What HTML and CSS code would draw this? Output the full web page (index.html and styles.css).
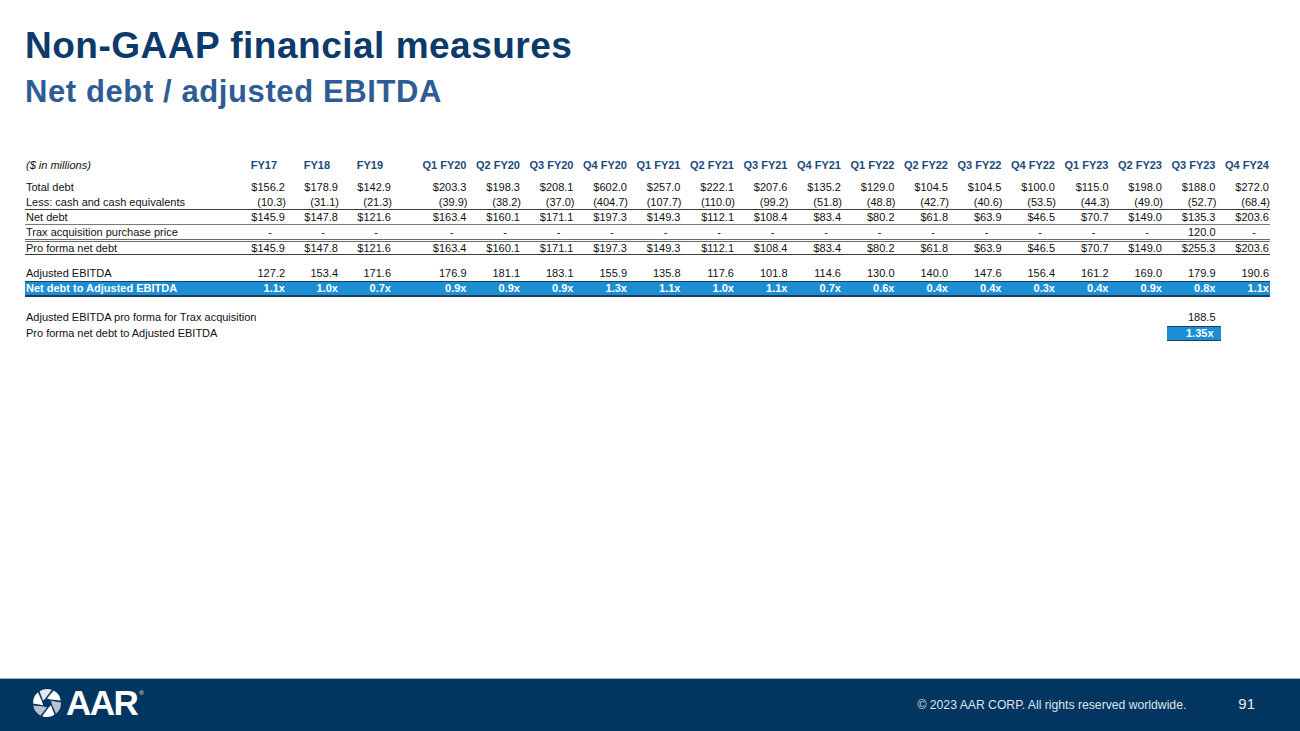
FILE: index.html
```html
<!DOCTYPE html>
<html lang="en">
<head>
<meta charset="utf-8">
<title>Non-GAAP financial measures</title>
<link rel="stylesheet" href="styles.css">
</head>
<body>
<div class="slide">
  <header class="head">
    <h1 class="title">Non-GAAP financial measures</h1>
    <h2 class="subtitle">Net debt / adjusted EBITDA</h2>
  </header>

  <main class="content">
    <table class="fin">
      <colgroup>
        <col class="c-label">
        <col class="c-num"><col class="c-num"><col class="c-num">
        <col class="c-gap">
        <col class="c-q"><col class="c-q"><col class="c-q"><col class="c-q">
        <col class="c-q"><col class="c-q"><col class="c-q"><col class="c-q">
        <col class="c-q"><col class="c-q"><col class="c-q"><col class="c-q">
        <col class="c-q"><col class="c-q"><col class="c-q"><col class="c-q">
      </colgroup>
      <thead>
        <tr class="hdr">
          <th class="lbl unit">($ in millions)</th>
          <th class="fy">FY17</th><th class="fy">FY18</th><th class="fy">FY19</th>
          <th></th>
          <th>Q1 FY20</th><th>Q2 FY20</th><th>Q3 FY20</th><th>Q4 FY20</th>
          <th>Q1 FY21</th><th>Q2 FY21</th><th>Q3 FY21</th><th>Q4 FY21</th>
          <th>Q1 FY22</th><th>Q2 FY22</th><th>Q3 FY22</th><th>Q4 FY22</th>
          <th>Q1 FY23</th><th>Q2 FY23</th><th>Q3 FY23</th><th>Q4 FY24</th>
        </tr>
      </thead>
      <tbody>
        <tr class="first">
          <td class="lbl">Total debt</td>
          <td>$156.2</td><td>$178.9</td><td>$142.9</td><td></td>
          <td>$203.3</td><td>$198.3</td><td>$208.1</td><td>$602.0</td>
          <td>$257.0</td><td>$222.1</td><td>$207.6</td><td>$135.2</td>
          <td>$129.0</td><td>$104.5</td><td>$104.5</td><td>$100.0</td>
          <td>$115.0</td><td>$198.0</td><td>$188.0</td><td>$272.0</td>
        </tr>
        <tr class="line-dark">
          <td class="lbl">Less: cash and cash equivalents</td>
          <td class="neg">(10.3)</td><td class="neg">(31.1)</td><td class="neg">(21.3)</td><td></td>
          <td class="neg">(39.9)</td><td class="neg">(38.2)</td><td class="neg">(37.0)</td><td class="neg">(404.7)</td>
          <td class="neg">(107.7)</td><td class="neg">(110.0)</td><td class="neg">(99.2)</td><td class="neg">(51.8)</td>
          <td class="neg">(48.8)</td><td class="neg">(42.7)</td><td class="neg">(40.6)</td><td class="neg">(53.5)</td>
          <td class="neg">(44.3)</td><td class="neg">(49.0)</td><td class="neg">(52.7)</td><td class="neg">(68.4)</td>
        </tr>
        <tr class="line-grey">
          <td class="lbl">Net debt</td>
          <td>$145.9</td><td>$147.8</td><td>$121.6</td><td></td>
          <td>$163.4</td><td>$160.1</td><td>$171.1</td><td>$197.3</td>
          <td>$149.3</td><td>$112.1</td><td>$108.4</td><td>$83.4</td>
          <td>$80.2</td><td>$61.8</td><td>$63.9</td><td>$46.5</td>
          <td>$70.7</td><td>$149.0</td><td>$135.3</td><td>$203.6</td>
        </tr>
        <tr class="line-double">
          <td class="lbl">Trax acquisition purchase price</td>
          <td class="dash">-</td><td class="dash">-</td><td class="dash">-</td><td></td>
          <td class="dash">-</td><td class="dash">-</td><td class="dash">-</td><td class="dash">-</td>
          <td class="dash">-</td><td class="dash">-</td><td class="dash">-</td><td class="dash">-</td>
          <td class="dash">-</td><td class="dash">-</td><td class="dash">-</td><td class="dash">-</td>
          <td class="dash">-</td><td class="dash">-</td><td>120.0</td><td class="dash">-</td>
        </tr>
        <tr class="line-dark pf">
          <td class="lbl">Pro forma net debt</td>
          <td>$145.9</td><td>$147.8</td><td>$121.6</td><td></td>
          <td>$163.4</td><td>$160.1</td><td>$171.1</td><td>$197.3</td>
          <td>$149.3</td><td>$112.1</td><td>$108.4</td><td>$83.4</td>
          <td>$80.2</td><td>$61.8</td><td>$63.9</td><td>$46.5</td>
          <td>$70.7</td><td>$149.0</td><td>$255.3</td><td>$203.6</td>
        </tr>
        <tr class="spacer"><td colspan="21"></td></tr>
        <tr>
          <td class="lbl">Adjusted EBITDA</td>
          <td>127.2</td><td>153.4</td><td>171.6</td><td></td>
          <td>176.9</td><td>181.1</td><td>183.1</td><td>155.9</td>
          <td>135.8</td><td>117.6</td><td>101.8</td><td>114.6</td>
          <td>130.0</td><td>140.0</td><td>147.6</td><td>156.4</td>
          <td>161.2</td><td>169.0</td><td>179.9</td><td>190.6</td>
        </tr>
        <tr class="ratio">
          <td class="lbl">Net debt to Adjusted EBITDA</td>
          <td>1.1x</td><td>1.0x</td><td>0.7x</td><td></td>
          <td>0.9x</td><td>0.9x</td><td>0.9x</td><td>1.3x</td>
          <td>1.1x</td><td>1.0x</td><td>1.1x</td><td>0.7x</td>
          <td>0.6x</td><td>0.4x</td><td>0.4x</td><td>0.3x</td>
          <td>0.4x</td><td>0.9x</td><td>0.8x</td><td>1.1x</td>
        </tr>
        <tr class="spacer2"><td colspan="21"></td></tr>
        <tr>
          <td class="lbl" colspan="19">Adjusted EBITDA pro forma for Trax acquisition</td>
          <td>188.5</td><td></td>
        </tr>
        <tr class="last">
          <td class="lbl" colspan="19">Pro forma net debt to Adjusted EBITDA</td>
          <td class="boxcell"><span class="pfbox">1.35x</span></td><td></td>
        </tr>
      </tbody>
    </table>
  </main>

  <footer class="foot">
    <div class="logo">
      <svg class="aperture" width="30" height="30" viewBox="-15 -15 30 30" aria-hidden="true">
        <g>
          <path class="b1" d="M0,-4.5 L6.5,-12.4 A14,14 0 0 1 13.8,-2.4 L3.3,-3.6 Z"/>
          <path class="b2" transform="rotate(60)" d="M0,-4.5 L6.5,-12.4 A14,14 0 0 1 13.8,-2.4 L3.3,-3.6 Z"/>
          <path class="b1" transform="rotate(120)" d="M0,-4.5 L6.5,-12.4 A14,14 0 0 1 13.8,-2.4 L3.3,-3.6 Z"/>
          <path class="b2" transform="rotate(180)" d="M0,-4.5 L6.5,-12.4 A14,14 0 0 1 13.8,-2.4 L3.3,-3.6 Z"/>
          <path class="b1" transform="rotate(240)" d="M0,-4.5 L6.5,-12.4 A14,14 0 0 1 13.8,-2.4 L3.3,-3.6 Z"/>
          <path class="b3" transform="rotate(300)" d="M0,-4.5 L6.5,-12.4 A14,14 0 0 1 13.8,-2.4 L3.3,-3.6 Z"/>
        </g>
      </svg>
      <span class="wordmark">AAR</span><span class="reg">®</span>
    </div>
    <div class="copy">© 2023 AAR CORP. All rights reserved worldwide.</div>
    <div class="pageno">91</div>
  </footer>
</div>
</body>
</html>
```

FILE: styles.css
```css
html, body {
  margin: 0;
  padding: 0;
  background: #ffffff;
}

.slide {
  width: 1300px;
  height: 731px;
  display: flex;
  flex-direction: column;
  font-family: "Liberation Sans", Arial, sans-serif;
  overflow: hidden;
}

.head {
  padding: 25px 0 0 25px;
}

.title {
  margin: 0;
  font-size: 37px;
  line-height: 42px;
  letter-spacing: 0.5px;
  font-weight: 700;
  color: #0c3b6b;
}

.subtitle {
  margin: 7px 0 0;
  font-size: 31px;
  line-height: 36px;
  letter-spacing: 0.6px;
  font-weight: 700;
  color: #2d5d94;
}

.content {
  flex: 1;
  padding: 48px 0 0 25px;
}

.fin {
  border-collapse: collapse;
  table-layout: fixed;
  width: 1245px;
  font-size: 11px;
  color: #111;
}

.c-label { width: 208px; }
.c-num { width: 53px; }
.c-gap { width: 22px; }
.c-q { width: 53.5px; }

.fin th,
.fin td {
  padding: 0 1px 0 0;
  height: 15px;
  line-height: 15px;
  text-align: right;
  white-space: nowrap;
  font-weight: 400;
}

.fin .lbl {
  text-align: left;
  padding-left: 1px;
}

.hdr th {
  font-weight: 700;
  color: #1b4a7b;
  height: 15px;
}

.hdr th.fy {
  padding-right: 9px;
}

.hdr th.unit {
  font-style: italic;
  font-weight: 400;
  color: #111;
}

.first td {
  padding-top: 7px;
  height: 15px;
}

.fin td.neg {
  padding-right: 0;
}

.fin td.dash {
  padding-right: 14px;
}

.line-dark td {
  border-bottom: 1px solid #3a3a3a;
  height: 14px;
  line-height: 14px;
}

.line-grey td {
  border-bottom: 1px solid #7a7a7a;
  height: 14px;
  line-height: 14px;
}

.line-double td {
  border-bottom: 3px double #6a6a6a;
  padding-top: 1px;
  height: 12px;
  line-height: 13px;
  vertical-align: top;
}

.pf td {
  height: 12px;
  line-height: 12px;
  vertical-align: top;
}

.spacer td {
  height: 11px;
}

.spacer2 td {
  height: 13px;
}

.ratio td {
  background: #1b8ed4;
  color: #ffffff;
  font-weight: 700;
  border-top: 1px solid #1f3e5c;
  border-bottom: 2px solid #1f3e5c;
  height: 13px;
  line-height: 13px;
}

.last td {
  height: 16px;
}

.boxcell {
  padding: 0;
  vertical-align: bottom;
}

.pfbox {
  display: block;
  margin: 0 -5px 0 4px;
  padding-right: 7px;
  background: #1b8ed4;
  color: #fff;
  font-weight: 700;
  text-align: right;
  line-height: 13px;
  border-top: 1px solid #1f3e5c;
  border-bottom: 1px solid #1f3e5c;
}

.foot {
  height: 52px;
  border-top: 1px solid #8fb0c9;
  background: #033561;
  display: flex;
  align-items: center;
  padding: 0 45px 0 32px;
}

.logo {
  display: flex;
  align-items: center;
  margin-top: -4px;
}

.aperture .b1 { fill: #ffffff; }
.aperture .b2 { fill: #b9c3cf; }
.aperture .b3 { fill: #e4e9ef; }

.wordmark {
  margin-left: 4px;
  font-size: 35px;
  line-height: 30px;
  font-weight: 700;
  letter-spacing: -1.5px;
  color: #ffffff;
}

.reg {
  align-self: flex-start;
  font-size: 6px;
  color: #ffffff;
  margin-left: 2px;
  margin-top: 2px;
}

.copy {
  margin-left: auto;
  font-size: 12.2px;
  color: #dfe5ec;
}

.pageno {
  margin-left: 52px;
  font-size: 15px;
  color: #e6ebf0;
  margin-top: -4px;
}
```
